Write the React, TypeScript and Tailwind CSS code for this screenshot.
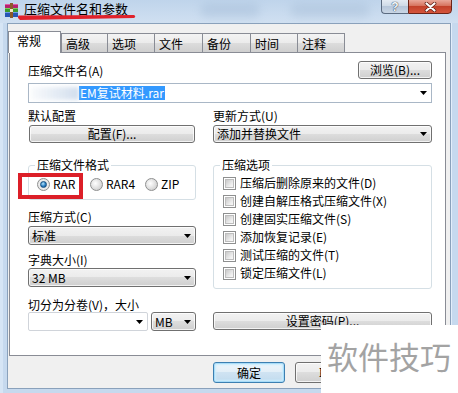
import React from "react";

const Arrow = () => (
  <svg width="7" height="4" viewBox="0 0 7 4" className="shrink-0">
    <path d="M0 0H7L3.5 4Z" fill="#000" />
  </svg>
);

function Btn({ children, className = "" }: { children: React.ReactNode; className?: string }) {
  return (
    <div
      className={`flex items-center justify-center border border-[#707070] rounded-[3px] bg-[linear-gradient(#f2f2f2,#ebebeb_50%,#dddddd_50%,#cfcfcf)] shadow-[inset_0_0_0_1px_rgba(255,255,255,0.75)] leading-[14px] ${className}`}
    >
      {children}
    </div>
  );
}

function Combo({ text, className = "" }: { text: string; className?: string }) {
  return (
    <div
      className={`flex items-center justify-between pl-[3px] pr-[4px] border border-[#707070] rounded-[3px] bg-[linear-gradient(#f2f2f2,#ebebeb_50%,#dddddd_50%,#cfcfcf)] shadow-[inset_0_0_0_1px_rgba(255,255,255,0.75)] leading-[14px] ${className}`}
    >
      <span>{text}</span>
      <Arrow />
    </div>
  );
}

function Radio({ checked, label, className = "" }: { checked?: boolean; label: string; className?: string }) {
  return (
    <div className={`flex items-center ${className}`}>
      <span
        className={`w-[13px] h-[13px] rounded-full border border-[#8e8f8f] flex items-center justify-center ${
          checked
            ? "bg-[radial-gradient(circle_at_50%_50%,#ffffff,#e6e6e6_70%,#c8c8c8)]"
            : "bg-[radial-gradient(circle_at_40%_40%,#ffffff,#d8d8d8_65%,#b9b9b9)]"
        }`}
      >
        {checked && (
          <span className="w-[7px] h-[7px] rounded-full bg-[radial-gradient(circle_at_40%_35%,#b5e4fb,#2a7fc4_55%,#0c4a86)] border border-[#174f7f]" />
        )}
      </span>
      <span className="ml-[3px] leading-[14px]">{label}</span>
    </div>
  );
}

function Check({ label }: { label: string }) {
  return (
    <div className="flex items-center h-[18px] pl-[9px]">
      <span className="w-[13px] h-[13px] border border-[#8e8f8f] bg-white flex items-center justify-center">
        <span className="w-[9px] h-[9px] bg-[linear-gradient(135deg,#c9c9c9,#eeeeee_70%,#f8f8f8)] border border-[#bdbdbd]" />
      </span>
      <span className="ml-[4px] leading-[14px]">{label}</span>
    </div>
  );
}

function Tab({ label, w }: { label: string; w: string }) {
  return (
    <div
      className={`h-[19px] ${w} border-t border-l border-[#898c95] bg-[linear-gradient(#f3f3f3,#ebebeb_50%,#dddddd_50%,#cfcfcf)] pl-[4px] pt-[3px] leading-[14px]`}
    >
      {label}
    </div>
  );
}

export default function App() {
  return (
    <div className="w-[458px] h-[393px] relative overflow-hidden bg-[#c6d9ee] text-[12px] text-black font-['Noto_Sans_CJK_SC',sans-serif]">
      {/* Title bar */}
      <div className="h-[23px] relative flex items-start bg-[linear-gradient(180deg,#bfd4eb,#d0e0f1)]">
        <div className="absolute left-[200px] top-[3px] w-[60px] h-[14px] rounded-full bg-[#9fb8d4] opacity-40 blur-[4px]" />
        <div className="absolute left-[290px] top-[3px] w-[80px] h-[14px] rounded-full bg-[#a3bad4] opacity-40 blur-[4px]" />
        <svg width="15" height="15" viewBox="0 0 15 15" className="ml-[4px] mt-[3px] shrink-0">
          <rect x="1" y="1" width="13" height="4" fill="#b3246f" />
          <rect x="1" y="1" width="13" height="1" fill="#e15aa3" />
          <rect x="1" y="5" width="13" height="4" fill="#3b9a2c" />
          <rect x="1" y="5" width="13" height="1" fill="#79cf5c" />
          <rect x="1" y="9" width="13" height="5" fill="#2656b4" />
          <rect x="1" y="9" width="13" height="1" fill="#6f9ce8" />
          <rect x="6" y="0" width="3" height="15" fill="#8b5a2b" />
          <rect x="6" y="6" width="3" height="3" fill="#f3e6c8" />
        </svg>
        <span className="relative ml-[5px] mt-[1px] text-[13px] leading-[15px]">压缩文件名和参数</span>
        <div className="relative ml-auto mr-[6px] flex">
          <div className="w-[27px] h-[15px] -mt-px border border-[#5b6b80] border-r-0 rounded-bl-[4px] bg-[linear-gradient(#e4ebf3,#cdd9e6_50%,#b7c7da_50%,#c9d6e5)] flex items-center justify-center">
            <span className="text-[12px] leading-[12px] font-bold text-[#f4f7fb] font-['Liberation_Sans',sans-serif] [text-shadow:0_0_1px_#2a3a50,0_0_1px_#2a3a50]">?</span>
          </div>
          <div className="w-[44px] h-[15px] -mt-px border border-[#6b2418] rounded-br-[4px] bg-[linear-gradient(#e9a89a,#d46d57_50%,#c2412a_50%,#d5553c)] flex items-center justify-center">
            <svg width="13" height="10" viewBox="0 0 13 10">
              <path d="M2.5 1.5L10.5 8.5M10.5 1.5L2.5 8.5" stroke="#5a1a10" strokeWidth="3.6" strokeLinecap="round" />
              <path d="M2.5 1.5L10.5 8.5M10.5 1.5L2.5 8.5" stroke="#ffffff" strokeWidth="2.2" strokeLinecap="round" />
            </svg>
          </div>
        </div>
      </div>

      {/* Body */}
      <div className="flex">
        <div className="w-[7px] h-[370px] bg-[#c6d9ee] border-l-[3px] border-l-[#d6e5f5]" />
        <div className="w-[444px] h-[366px] border border-[#8aa1bb] bg-[#f0f0f0] flex flex-col">
          {/* Tabs */}
          <div className="mt-[7px] h-[21px] pl-px flex items-end relative z-10">
            <div className="-ml-px w-[53px] h-[22px] -mb-px border-t border-l border-r border-[#898c95] bg-white pl-[8px] pt-[2px] leading-[14px]">
              常规
            </div>
            <Tab label="高级" w="w-[46px]" />
            <Tab label="选项" w="w-[47px]" />
            <Tab label="文件" w="w-[48px]" />
            <Tab label="备份" w="w-[48px]" />
            <Tab label="时间" w="w-[47px]" />
            <div className="h-[19px] w-[48px] border-t border-l border-r border-[#898c95] bg-[linear-gradient(#f3f3f3,#ebebeb_50%,#dddddd_50%,#cfcfcf)] pl-[4px] pt-[3px] leading-[14px]">
              注释
            </div>
          </div>

          {/* Panel */}
          <div className="ml-px w-[437px] h-[304px] border border-[#898c95] bg-white pl-[18px] pr-[13px] pt-[8px]">
            <div className="flex items-center justify-between h-[18px]">
              <span className="leading-[14px] mt-px">压缩文件名(A)</span>
              <Btn className="w-[74px] h-[18px]">浏览(B)...</Btn>
            </div>
            <div className="mt-[4px] h-[20px] border border-[#a9b7c6] bg-white flex items-center pl-[2px] pr-[4px]">
              <div className="w-[48px] h-[13px] bg-[linear-gradient(90deg,rgba(225,232,240,0.2),rgba(190,208,230,0.7))] blur-[2px]" />
              <span className="bg-[#3399ff] text-white leading-[14px] px-px">EM复试材料.rar</span>
              <span className="ml-auto">
                <Arrow />
              </span>
            </div>

            <div className="grid grid-cols-[168px_219px] gap-x-[17px]">
              {/* Left column */}
              <div className="flex flex-col">
                <div className="mt-[5px] h-[16px] leading-[16px]">默认配置</div>
                <Btn className="mt-px h-[18px] w-[166px] ml-px">配置(F)...</Btn>
                <fieldset className="mt-[15px] border border-[#d5dfe5] rounded-[3px] pb-[8px]">
                  <legend className="ml-[6px] px-[2px] leading-[14px]">压缩文件格式</legend>
                  <div className="mt-[5px] h-[14px] flex items-center pl-[8px]">
                    <Radio checked label="RAR" className="w-[53px]" />
                    <Radio label="RAR4" className="w-[55px]" />
                    <Radio label="ZIP" />
                  </div>
                </fieldset>
                <div className="mt-[10px] h-[14px] leading-[14px]">压缩方式(C)</div>
                <Combo text="标准" className="mt-[2px] h-[19px]" />
                <div className="mt-[8px] h-[14px] leading-[14px]">字典大小(I)</div>
                <Combo text="32 MB" className="mt-px h-[19px]" />
                <div className="mt-[11px] h-[14px] leading-[14px]">切分为分卷(V)，大小</div>
                <div className="flex gap-[3px] h-[19px]">
                  <div className="w-[120px] h-[19px] border border-[#d0d4da] bg-white flex items-center justify-end pr-[4px] rounded-[2px]">
                    <Arrow />
                  </div>
                  <Combo text="MB" className="w-[45px] h-[19px]" />
                </div>
              </div>

              {/* Right column */}
              <div className="flex flex-col">
                <div className="mt-[5px] h-[16px] leading-[16px]">更新方式(U)</div>
                <Combo text="添加并替换文件" className="mt-px h-[18px]" />
                <fieldset className="mt-[15px] border border-[#d5dfe5] rounded-[3px] pb-[6px]">
                  <legend className="ml-[6px] px-[2px] leading-[14px]">压缩选项</legend>
                  <div className="mt-[2px] flex flex-col">
                    <Check label="压缩后删除原来的文件(D)" />
                    <Check label="创建自解压格式压缩文件(X)" />
                    <Check label="创建固实压缩文件(S)" />
                    <Check label="添加恢复记录(E)" />
                    <Check label="测试压缩的文件(T)" />
                    <Check label="锁定压缩文件(L)" />
                  </div>
                </fieldset>
                <Btn className="mt-[23px] h-[18px]">设置密码(P)...</Btn>
              </div>
            </div>
          </div>

          {/* Bottom buttons */}
          <div className="mt-[6px] pl-[205px] flex gap-[10px]">
            <div className="w-[72px] h-[21px] flex items-center justify-center border border-[#3c7fb1] rounded-[3px] bg-[linear-gradient(#eef6fb,#e2eef7_50%,#cfe3f2_50%,#c2dbee)] shadow-[inset_0_0_0_1px_#a8dcf8,inset_0_0_2px_2px_#c9ecfd] leading-[14px]">
              确定
            </div>
            <Btn className="w-[72px] h-[21px]">取消</Btn>
          </div>
        </div>
        <div className="w-[7px] h-[370px] bg-[#c6d9ee] border-l border-l-[#e3eefa]" />
      </div>

      {/* Red annotation underline */}
      <svg width="140" height="24" viewBox="0 0 140 24" className="absolute left-0 top-0 pointer-events-none">
        <path d="M18.5 15.6 L134 15 Q136.5 16.4 134 18 L20 20 Q16.8 17.9 18.5 15.6Z" fill="#e0222b" />
      </svg>

      {/* Red annotation box */}
      <div className="absolute left-[18px] top-[173px] w-[65px] h-[26px] border-[4px] border-[#dc1f28] pointer-events-none" />

      {/* Watermark */}
      <div className="absolute left-[321px] top-[325px] right-0 bottom-0 bg-white pl-[6px] pt-[13px]">
        <span className="text-[31px] leading-[36px] text-[#a3a3a3]">软件技巧</span>
      </div>
    </div>
  );
}
